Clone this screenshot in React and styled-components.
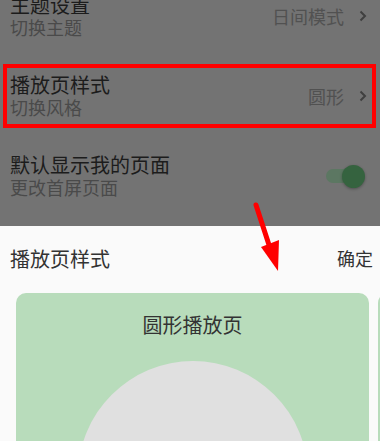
import React from 'react';
import styled, { createGlobalStyle } from 'styled-components';

const GlobalStyle = createGlobalStyle`
  html, body {
    margin: 0;
    padding: 0;
    overflow: hidden;
  }
  body {
    font-family: "Noto Sans CJK SC", "Noto Sans", sans-serif;
  }
`;

const Page = styled.div`
  position: relative;
  width: 380px;
  height: 441px;
  overflow: hidden;
  background: #737373;
  display: flex;
  flex-direction: column;
`;

const Backdrop = styled.div`
  height: 226px;
  flex-shrink: 0;
  overflow: hidden;
`;

const List = styled.div`
  margin-top: -24px;
`;

const Row = styled.div`
  position: relative;
  height: 80px;
  padding: 0 ${(p) => (p.$switch ? 16 : 13)}px 0 10px;
  display: flex;
  align-items: center;
  justify-content: space-between;
  box-sizing: border-box;
`;

const Texts = styled.div`
  display: flex;
  flex-direction: column;
`;

const Title = styled.div`
  font-size: 20px;
  line-height: 22px;
  color: #1c1c1c;
`;

const Subtitle = styled.div`
  font-size: 18px;
  line-height: 22px;
  color: #4a4a4a;
`;

const Value = styled.div`
  display: flex;
  align-items: center;
  gap: 15px;
  font-size: 18px;
  color: #515151;
`;

const Highlight = styled.div`
  position: absolute;
  top: 8px;
  bottom: 8px;
  left: 3px;
  right: 4px;
  border: 4px solid #ff0000;
`;

const Switch = styled.div`
  position: relative;
  width: 38px;
  height: 14px;
  border-radius: 7px;
  background: #5c7762;
`;

const Thumb = styled.div`
  position: absolute;
  right: -1px;
  top: -4.5px;
  width: 23px;
  height: 23px;
  border-radius: 50%;
  background: #35633f;
  box-shadow: 0 1px 3px rgba(0, 0, 0, 0.3);
`;

const Sheet = styled.div`
  flex: 1;
  background: #fafafa;
  display: flex;
  flex-direction: column;
`;

const SheetHeader = styled.div`
  height: 64px;
  padding: 0 7px 0 10px;
  display: flex;
  align-items: center;
  justify-content: space-between;
  color: #333;
`;

const SheetTitle = styled.div`
  font-size: 20px;
`;

const Confirm = styled.div`
  font-size: 18px;
`;

const Carousel = styled.div`
  display: flex;
  gap: 9px;
  padding: 3px 0 0 16px;
  overflow: hidden;
`;

const Card = styled.div`
  flex-shrink: 0;
  width: 353px;
  height: 320px;
  border-radius: 10px;
  background: #b8dcbb;
  display: flex;
  flex-direction: column;
  align-items: center;
  padding-top: 20px;
  box-sizing: border-box;
`;

const CardTitle = styled.div`
  font-size: 20px;
  line-height: 24px;
  color: #333;
`;

const Disc = styled.div`
  margin-top: 24px;
  width: 230px;
  height: 230px;
  border-radius: 50%;
  background: #e0e0e0;
`;

const ArrowLayer = styled.svg`
  position: absolute;
  left: 0;
  top: 0;
  pointer-events: none;
`;

const Chevron = () => (
  <svg width="8" height="12" viewBox="0 0 8 12">
    <path d="M1.5 1.5 L6 6 L1.5 10.5" fill="none" stroke="#3f3f3f" strokeWidth="2" />
  </svg>
);

export default function App() {
  return (
    <>
      <GlobalStyle />
      <Page>
        <Backdrop>
          <List>
            <Row>
              <Texts>
                <Title>主题设置</Title>
                <Subtitle>切换主题</Subtitle>
              </Texts>
              <Value>
                日间模式
                <Chevron />
              </Value>
            </Row>
            <Row>
              <Texts>
                <Title>播放页样式</Title>
                <Subtitle>切换风格</Subtitle>
              </Texts>
              <Value>
                圆形
                <Chevron />
              </Value>
              <Highlight />
            </Row>
            <Row $switch>
              <Texts>
                <Title>默认显示我的页面</Title>
                <Subtitle>更改首屏页面</Subtitle>
              </Texts>
              <Switch>
                <Thumb />
              </Switch>
            </Row>
          </List>
        </Backdrop>
        <Sheet>
          <SheetHeader>
            <SheetTitle>播放页样式</SheetTitle>
            <Confirm>确定</Confirm>
          </SheetHeader>
          <Carousel>
            <Card>
              <CardTitle>圆形播放页</CardTitle>
              <Disc />
            </Card>
            <Card />
          </Carousel>
        </Sheet>
        <ArrowLayer width="380" height="441" viewBox="0 0 380 441">
          <line x1="256" y1="205" x2="270" y2="248" stroke="#ff0000" strokeWidth="5" strokeLinecap="round" />
          <polygon points="261,247 279,240 278,271" fill="#ff0000" />
        </ArrowLayer>
      </Page>
    </>
  );
}
